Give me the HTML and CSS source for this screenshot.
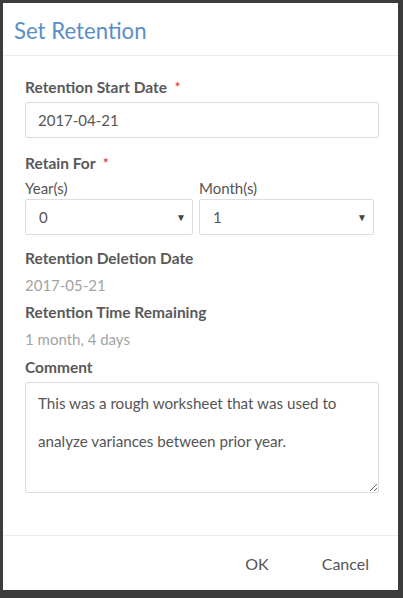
FILE: index.html
```html
<!DOCTYPE html>
<html lang="en">
<head>
    <meta charset="UTF-8">
    <meta name="viewport" content="width=device-width, initial-scale=1.0">
    <title>Set Retention</title>
    <link rel="stylesheet" href="styles.css">
</head>
<body>

<div class="dialog">
    <header class="dialog-header">
        <h1>Set Retention</h1>
    </header>

    <main class="dialog-body">
        <div class="field">
            <label class="field-label">Retention Start Date <span class="required">*</span></label>
            <input class="text-input" type="text" value="2017-04-21">
        </div>

        <div class="field retain">
            <label class="field-label">Retain For <span class="required">*</span></label>
            <div class="retain-row">
                <div class="retain-col">
                    <span class="sub-label">Year(s)</span>
                    <div class="select">
                        <span>0</span>
                        <span class="caret">&#9660;</span>
                    </div>
                </div>
                <div class="retain-col">
                    <span class="sub-label">Month(s)</span>
                    <div class="select">
                        <span>1</span>
                        <span class="caret">&#9660;</span>
                    </div>
                </div>
            </div>
        </div>

        <div class="field info">
            <span class="field-label">Retention Deletion Date</span>
            <span class="field-value">2017-05-21</span>
        </div>

        <div class="field info">
            <span class="field-label">Retention Time Remaining</span>
            <span class="field-value">1 month, 4 days</span>
        </div>

        <div class="field comment">
            <label class="field-label">Comment</label>
            <textarea class="text-area">This was a rough worksheet that was used to analyze variances between prior year.</textarea>
        </div>
    </main>

    <footer class="dialog-footer">
        <button class="btn">OK</button>
        <button class="btn">Cancel</button>
    </footer>
</div>

</body>
</html>
```

FILE: styles.css
```css
body {
    margin: 0;
    background: #3c3c3c; /* dimmed page behind the dialog */
    font-family: Lato, "Open Sans", sans-serif;
    color: #555555;
}

.dialog {
    margin: 3px 0 0 3px;
    width: 395px;
    height: 587px;
    background: #ffffff;
    display: flex;
    flex-direction: column;
}

.dialog-header {
    height: 53px;
    border-bottom: 1px solid #ececec;
    padding: 0 11px;
    display: flex;
    align-items: center;
    box-sizing: border-box;
    flex: none;
}

.dialog-header h1 {
    margin: 0;
    padding-top: 2px;
    font-size: 22.2px;
    font-weight: 400;
    color: #5a8ec7;
}

.dialog-body {
    flex: 1;
    padding: 21px 19px 0 22px;
}

.field {
    display: flex;
    flex-direction: column;
}

.field-label {
    font-size: 15.5px;
    font-weight: 700;
    line-height: 20px;
    color: #595959;
}

.required {
    color: #e53935;
    margin-left: 4px;
    font-size: 13px;
    vertical-align: top;
}

.text-input {
    margin-top: 5px;
    height: 36px;
    box-sizing: border-box;
    border: 1px solid #dddddd;
    border-radius: 2px;
    padding: 0 12px;
    font-family: inherit;
    font-size: 15px;
    color: #555555;
    width: 354px;
}

.retain {
    margin-top: 15px;
}

.retain-row {
    display: flex;
    gap: 6px;
    margin-top: 5px;
}

.retain-col {
    display: flex;
    flex-direction: column;
}

.retain-col:first-child {
    width: 168px;
}

.retain-col:last-child {
    width: 175px;
}

.sub-label {
    font-size: 15px;
    line-height: 20px;
    margin-bottom: 1px;
}

.select {
    height: 36px;
    box-sizing: border-box;
    border: 1px solid #dddddd;
    border-radius: 2px;
    padding: 0 6px 0 13px;
    display: flex;
    align-items: center;
    justify-content: space-between;
    font-size: 15px;
}

.caret {
    font-size: 10px;
    color: #444444;
}

.info {
    margin-top: 13px;
}

.info + .info {
    margin-top: 7px;
}

.field-value {
    margin-top: 7px;
    font-size: 15px;
    line-height: 20px;
    color: #a3a3a3;
}

.comment {
    margin-top: 8px;
}

.text-area {
    margin-top: 5px;
    width: 354px;
    height: 111px;
    box-sizing: border-box;
    border: 1px solid #dddddd;
    border-radius: 2px;
    padding: 1px 12px;
    font-family: inherit;
    font-size: 15.2px;
    line-height: 38px;
    color: #555555;
    resize: vertical;
}

.dialog-footer {
    height: 55px;
    border-top: 1px solid #ececec;
    display: flex;
    justify-content: flex-end;
    align-items: center;
    padding: 0 20px 0 0;
    box-sizing: border-box;
    flex: none;
}

.btn {
    background: transparent;
    border: none;
    font-family: inherit;
    font-size: 16px;
    color: #555555;
    padding: 0 9px;
    margin-left: 35px;
}
```
